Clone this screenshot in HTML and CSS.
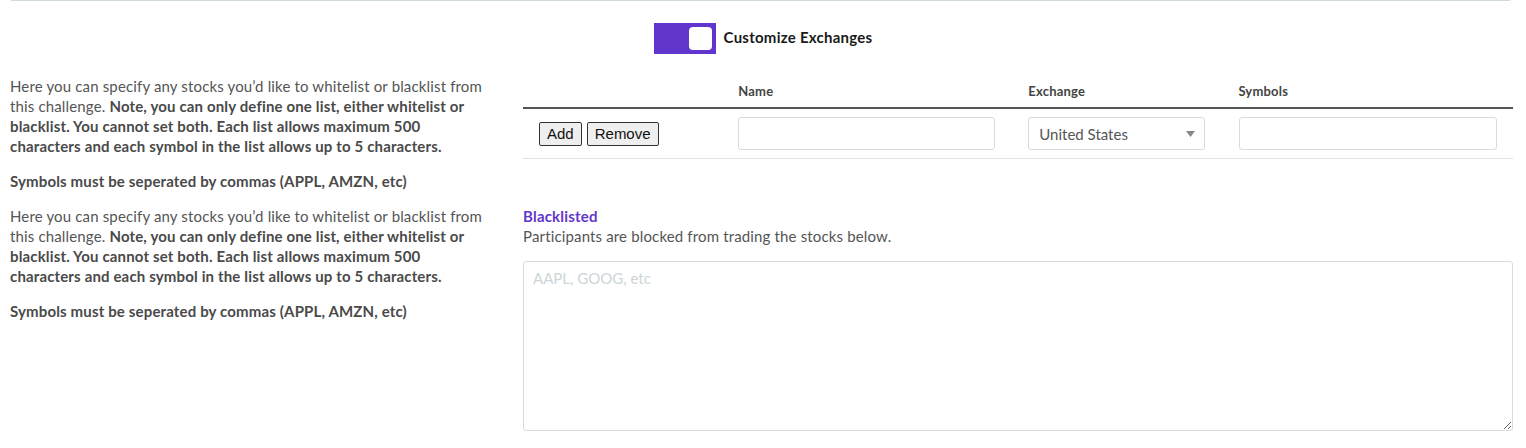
FILE: index.html
```html
<!DOCTYPE html>
<html>
<head>
<meta charset="utf-8">
<link rel="stylesheet" href="styles.css">
</head>
<body>
<div class="page">
  <div class="topline"></div>
  <div class="toggle-row">
    <span class="toggle"><span class="knob"></span></span>
    <span class="toggle-label">Customize Exchanges</span>
  </div>
  <div class="grid">
    <div class="help">
      <p>Here you can specify any stocks you’d like to whitelist or blacklist from this challenge. <b>Note, you can only define one list, either whitelist or blacklist. You cannot set both. Each list allows maximum 500 characters and each symbol in the list allows up to 5 characters.</b></p>
      <p><b>Symbols must be seperated by commas (APPL, AMZN, etc)</b></p>
    </div>
    <div class="right">
      <table class="ex-table">
        <thead>
          <tr>
            <th class="c1"></th>
            <th class="c2">Name</th>
            <th class="c3">Exchange</th>
            <th class="c4">Symbols</th>
          </tr>
        </thead>
        <tbody>
          <tr>
            <td class="c1 btns"><button class="btn">Add</button><button class="btn">Remove</button></td>
            <td class="c2"><input class="field name-field" type="text"></td>
            <td class="c3">
              <div class="select">
                <span>United States</span>
                <svg class="caret" width="9" height="6" viewBox="0 0 9 6"><path d="M0 0h9L4.5 6z" fill="#888"/></svg>
              </div>
            </td>
            <td class="c4"><input class="field sym-field" type="text"></td>
          </tr>
        </tbody>
      </table>
    </div>
    <div class="help">
      <p>Here you can specify any stocks you’d like to whitelist or blacklist from this challenge. <b>Note, you can only define one list, either whitelist or blacklist. You cannot set both. Each list allows maximum 500 characters and each symbol in the list allows up to 5 characters.</b></p>
      <p><b>Symbols must be seperated by commas (APPL, AMZN, etc)</b></p>
    </div>
    <div class="right">
      <div class="bl-title">Blacklisted</div>
      <div class="bl-desc">Participants are blocked from trading the stocks below.</div>
      <textarea class="bl-area" placeholder="AAPL, GOOG, etc"></textarea>
    </div>
  </div>
</div>
</body>
</html>
```

FILE: styles.css
```css
html, body {
  margin: 0;
  padding: 0;
  background: #fff;
}
body {
  font-family: Lato, "Open Sans", sans-serif;
  color: #555;
}
.page {
  width: 1526px;
}
.topline {
  margin: 0 16px 0 11px;
  border-top: 1px solid #cfd8dc;
}
.toggle-row {
  display: flex;
  justify-content: center;
  align-items: center;
  gap: 8px;
  padding-top: 22px;
  margin-bottom: 22px;
}
.toggle {
  display: flex;
  justify-content: flex-end;
  align-items: center;
  width: 62px;
  height: 31px;
  box-sizing: border-box;
  padding-right: 4px;
  background: #6236cc;
}
.knob {
  width: 23px;
  height: 23px;
  background: #fff;
  border-radius: 4px;
}
.toggle-label {
  font-size: 15px;
  line-height: 18px;
  font-weight: 700;
  letter-spacing: 0.25px;
  color: #1a1a1a;
  margin-top: -3px;
}
.grid {
  display: grid;
  grid-template-columns: 480px 990px;
  column-gap: 33px;
  padding-left: 10px;
}
.help p {
  margin: 0 0 15px;
  font-size: 15px;
  letter-spacing: 0.15px;
  line-height: 20px;
  color: #555;
}
.help b {
  font-weight: 700;
  color: #4a4a4a;
}
.ex-table {
  width: 990px;
  border-collapse: collapse;
}
.ex-table th {
  text-align: left;
  font-size: 13px;
  font-weight: 700;
  letter-spacing: 0.2px;
  color: #444;
  line-height: 18px;
  padding: 6px 8px 7px;
  border-bottom: 2px solid #555;
}
.ex-table td {
  padding: 8px 8px 8px;
  border-bottom: 1px solid #dde4e6;
  vertical-align: middle;
}
.c1 { width: 189px; }
.c2 { width: 275px; }
.c3 { width: 195px; }
.c4 { width: 267px; }
.ex-table td.btns {
  padding-left: 16px;
}
.btn {
  font-family: "Liberation Sans", Arial, sans-serif;
  font-size: 15px;
  line-height: 17px;
  color: #111;
  background: #efefef;
  border: 1px solid #333;
  border-radius: 2px;
  padding: 2px 7px 3px;
  margin: 0 5px 0 0;
  vertical-align: middle;
}
.field {
  display: block;
  box-sizing: border-box;
  height: 33px;
  border: 1px solid #d3dde0;
  border-radius: 3px;
  background: #fff;
  font-family: Lato, sans-serif;
  font-size: 14px;
  padding: 0 10px;
}
.name-field { width: 257px; }
.sym-field { width: 258px; margin-left: 1px; }
.select {
  display: flex;
  align-items: center;
  justify-content: space-between;
  box-sizing: border-box;
  width: 177px;
  height: 33px;
  border: 1px solid #d3dde0;
  border-radius: 3px;
  padding: 0 9px 0 10px;
  font-size: 15px;
  color: #555;
}
.caret {
  display: block;
}
.bl-title {
  font-size: 15px;
  line-height: 20px;
  font-weight: 700;
  letter-spacing: 0.2px;
  color: #6236cc;
}
.bl-desc {
  font-size: 15px;
  letter-spacing: 0.15px;
  line-height: 20px;
  color: #555;
}
.bl-area {
  display: block;
  box-sizing: border-box;
  margin-top: 15px;
  width: 990px;
  height: 170px;
  border: 1px solid #d3dde0;
  border-radius: 3px;
  padding: 7px 9px;
  font-family: Lato, sans-serif;
  font-size: 15px;
  color: #555;
  resize: both;
}
.bl-area::placeholder {
  color: #ccd5d8;
}
```
